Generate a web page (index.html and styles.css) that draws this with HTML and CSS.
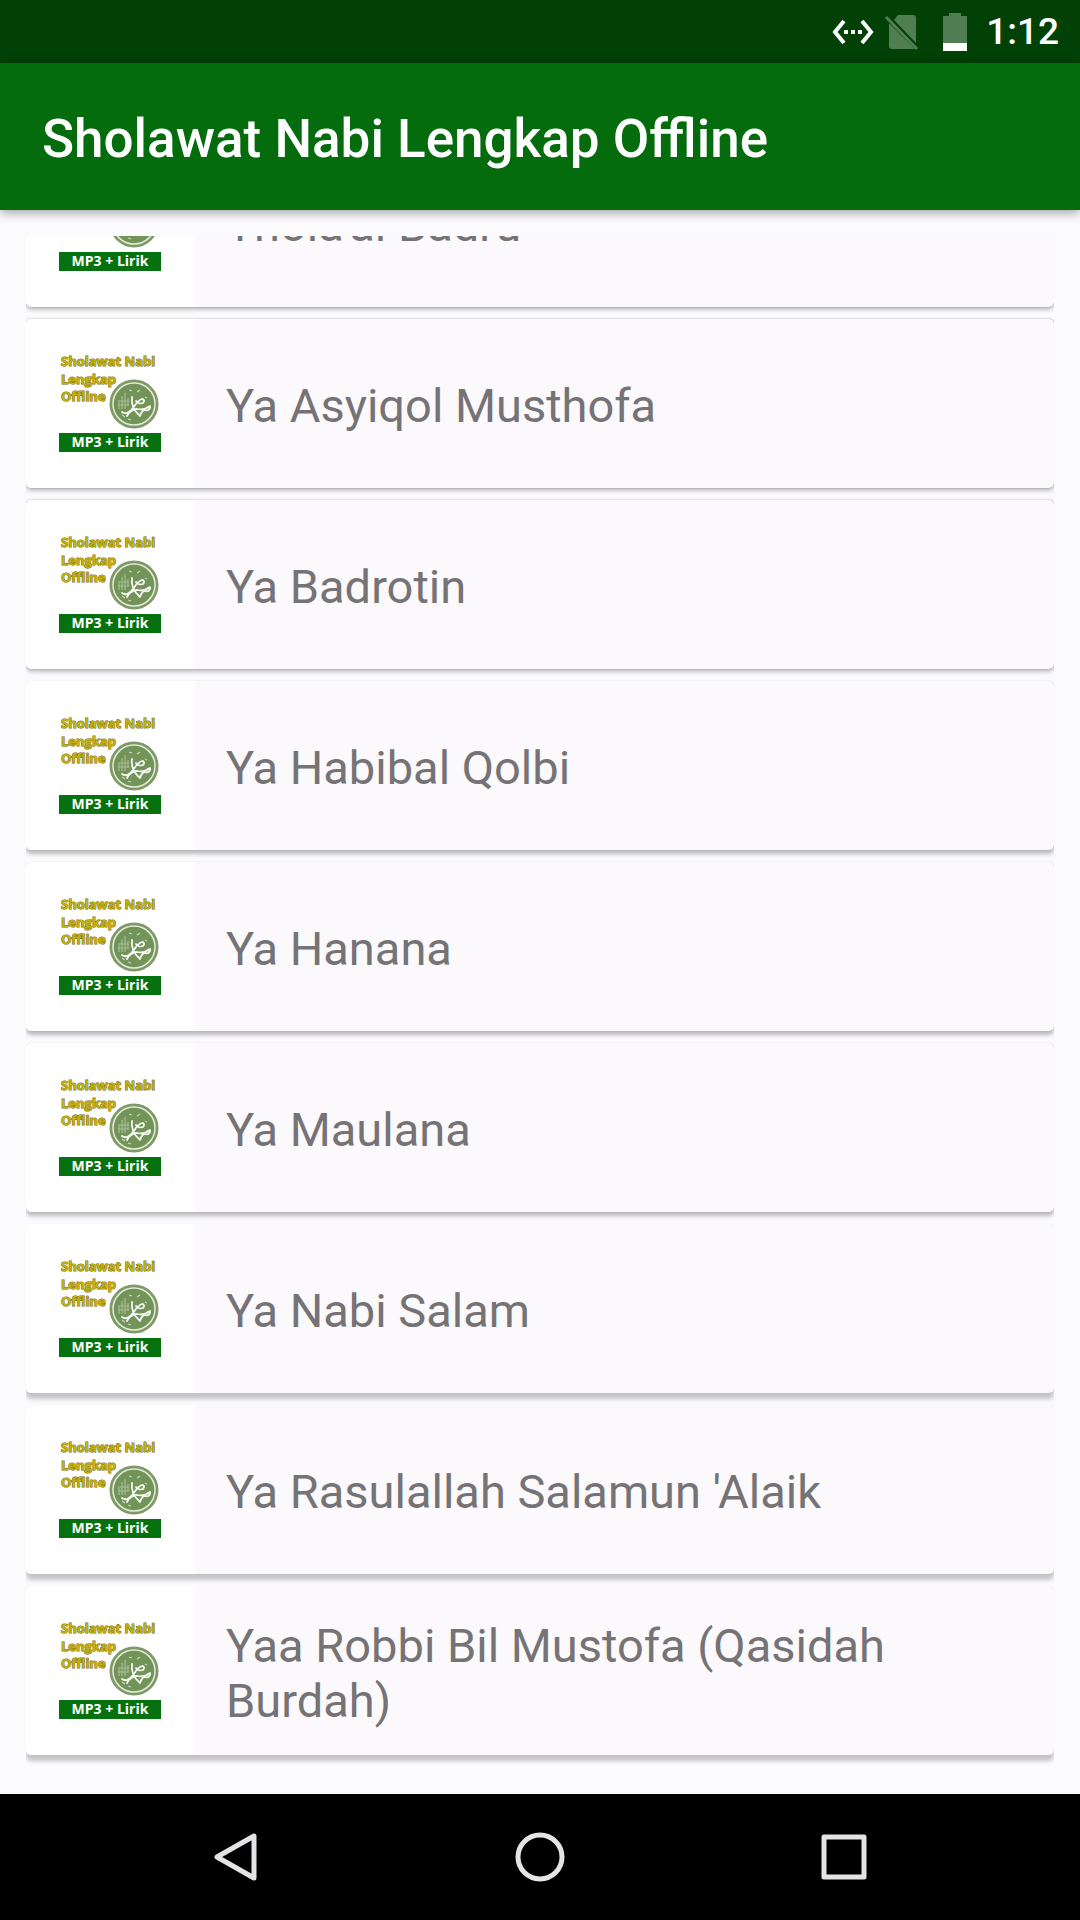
FILE: index.html
```html
<!DOCTYPE html>
<html lang="id">
<head>
<meta charset="UTF-8">
<meta name="viewport" content="width=device-width, initial-scale=1">
<title>Sholawat Nabi Lengkap Offline</title>
<link rel="stylesheet" href="styles.css">
</head>
<body>
  <div class="status-bar">
    <svg class="ic-network" viewBox="0 0 42 26" aria-hidden="true">
      <path d="M12 2L3 13l9 11M30 2l9 11-9 11" fill="none" stroke="#fff" stroke-width="4"/>
      <path d="M12 11h4v4h-4zM19 11h4v4h-4zM26 11h4v4h-4z" fill="#fff"/>
    </svg>
    <svg class="ic-sim" viewBox="0 0 36 38" aria-hidden="true">
      <path d="M14 2h15q3 0 3 3v25L10 7zM6 11l25 25H8q-3 0-3-3V11z" fill="#517d53"/>
      <path d="M2 4l31 32" stroke="#517d53" stroke-width="3"/>
    </svg>
    <svg class="ic-battery" viewBox="0 0 24 38" aria-hidden="true">
      <path d="M6 0h12v3h6v27H0V3h6z" fill="#517d53"/>
      <path d="M0 30h24v8H0z" fill="#fff"/>
    </svg>
    <span class="clock">1:12</span>
  </div>

  <header>
    <h1>Sholawat Nabi Lengkap Offline</h1>
  </header>

  <main>
    <ul class="song-list" id="songList"></ul>
  </main>

  <nav>
    <button type="button" aria-label="Back">
      <svg viewBox="0 0 52 52"><path d="M44 5v42L7 26z"/></svg>
    </button>
    <button type="button" aria-label="Home">
      <svg viewBox="0 0 52 52"><circle cx="26" cy="26" r="22"/></svg>
    </button>
    <button type="button" aria-label="Recent apps">
      <svg viewBox="0 0 52 52"><rect x="6" y="6" width="40" height="40"/></svg>
    </button>
  </nav>

<script>
  const songs = [
    "Thola'al Badru",
    "Ya Asyiqol Musthofa",
    "Ya Badrotin",
    "Ya Habibal Qolbi",
    "Ya Hanana",
    "Ya Maulana",
    "Ya Nabi Salam",
    "Ya Rasulallah Salamun 'Alaik",
    "Yaa Robbi Bil Mustofa (Qasidah Burdah)"
  ];

  // cover shared by all songs
  const cover = `
    <svg class="song-cover" viewBox="0 0 169 169" aria-hidden="true">
      <g class="cover-title">
        <text x="35" y="47">Sholawat Nabi</text>
        <text x="35" y="65">Lengkap</text>
        <text x="35" y="82">Offline</text>
      </g>
      <circle cx="108" cy="85" r="23.5" fill="#7d9a62" stroke="#7f9969" stroke-width="2"/>
      <circle cx="108" cy="85" r="21" fill="#739459" stroke="#e2ead9" stroke-width="1.5"/>
      <path d="M93 81v9M96 77v13M99 74v16M102 79v8M92 86h11M94 82h9" stroke="#a9bd97" stroke-width="1.2" fill="none"/>
      <path d="M103 71l3 1M111 73l3-2M119 78l2 1M96 96l3 2M102 100l3 1M122 87l1 3" stroke="#c8d6ba" stroke-width="1.2" fill="none"/>
      <path d="M96 93c4 3 8 0 11-4 3-4 5-8 9-9 2 0 3 2 1 4-3 1-6 0-7-2M106 78c-1 7 2 14 8 19 1-3 2-6 5-6 3 1 6-1 5-4-4 3-9 4-13 3-4 0-8 3-10 7" stroke="#f5f8f2" stroke-width="1.8" fill="none" stroke-linecap="round" stroke-linejoin="round"/>
      <rect x="33" y="114" width="102" height="19" fill="#05720f"/>
      <text class="cover-label" x="84" y="128">MP3 + Lirik</text>
    </svg>
  `;

  const songListEl = document.getElementById("songList");

  songs.forEach(song => {
    const li = document.createElement("li");
    li.classList.add("song");
    li.innerHTML = `
      ${cover}
      <span class="song-name">${song}</span>
    `;
    songListEl.appendChild(li);
  });
</script>
</body>
</html>
```
FILE: styles.css
```css
* {
  box-sizing: border-box;
}
body {
  margin: 0;
  height: 100vh;
  display: flex;
  flex-direction: column;
  background: #fbfafd;
  font-family: Roboto, "Liberation Sans", sans-serif;
}

/* Status bar */
.status-bar {
  display: flex;
  flex: none;
  align-items: center;
  justify-content: flex-end;
  height: 63px;
  padding-right: 21px;
  background: #024106;
  color: white;
}
.ic-network {
  width: 42px;
  height: 26px;
}
.ic-sim {
  width: 36px;
  height: 38px;
  margin: 0 23px 0 10px;
}
.ic-battery {
  width: 24px;
  height: 38px;
}
.clock {
  margin-left: 19px;
  font-size: 37px;
  font-weight: 500;
}

header {
  display: flex;
  flex: none;
  align-items: center;
  height: 147px;
  padding: 4px 42px 0;
  background: #046c0d;
  color: white;
  box-shadow: 0 3px 10px rgb(0 0 0 / 0.35);
}
header h1 {
  margin: 0;
  font-size: 53px;
  font-weight: 500;
}

/* Song list, scrolled to its end */
main {
  display: flex;
  flex: 1;
  min-height: 0;
  padding: 26px 26px 0;
}
.song-list {
  display: flex;
  flex: 1;
  flex-direction: column;
  justify-content: flex-end;
  gap: 12px;
  margin: 0;
  padding: 0 0 39px;
  overflow: hidden;
  list-style: none;
}
.song {
  display: flex;
  flex: none;
  align-items: center;
  min-height: 169px;
  border-radius: 5px;
  background: #fbf9fc;
  box-shadow: 0 2px 5px rgb(0 0 0 / 0.32), 0 0 1px rgb(0 0 0 / 0.4);
}
.song:nth-child(n+4) {
  box-shadow: 0 4px 4px rgb(0 0 0 / 0.26), 0 0 1px rgb(0 0 0 / 0.25);
}
.song:nth-child(n+7) {
  box-shadow: 0 6px 4px rgb(0 0 0 / 0.22), 0 0 1px rgb(0 0 0 / 0.15);
}
.song-cover {
  flex: none;
  width: 169px;
  height: 169px;
  border-radius: 5px 0 0 5px;
  background: white;
}
.song-name {
  padding: 4px 31px 0;
  color: #757376;
  font-size: 47px;
  line-height: 55px;
}
.cover-title {
  fill: #c4b20c;
  stroke: #75690f;
  stroke-width: 1px;
  paint-order: stroke;
  font: 700 13px "Open Sans", sans-serif;
}
.cover-label {
  fill: white;
  font: 700 14px "Open Sans", sans-serif;
  text-anchor: middle;
}

/* Navigation bar */
nav {
  display: flex;
  flex: none;
  align-items: center;
  justify-content: center;
  gap: 252px;
  height: 126px;
  background: black;
}
nav button {
  width: 52px;
  height: 52px;
  padding: 0;
  border: none;
  background: none;
}
nav svg {
  display: block;
  fill: none;
  stroke: #e6e3e6;
  stroke-width: 5px;
  stroke-linejoin: round;
}
```
